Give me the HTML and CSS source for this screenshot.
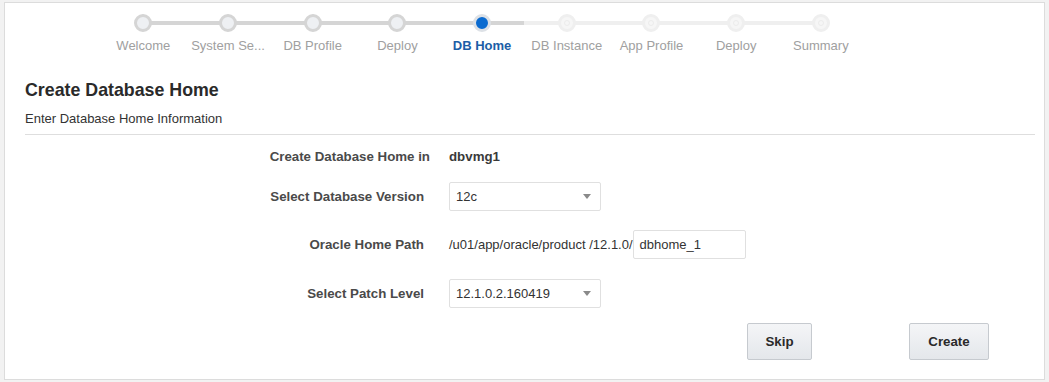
FILE: index.html
```html
<!DOCTYPE html>
<html lang="en">
<head>
  <meta charset="UTF-8" />
  <title>Create Database Home</title>
  <link rel="stylesheet" href="styles.css">
</head>
<body>

  <div class="frame">

    <!-- TRAIN -->
    <ul class="train">
      <li class="stop done"><span class="dot"></span><span class="label">Welcome</span></li>
      <li class="stop done"><span class="dot"></span><span class="label">System Se...</span></li>
      <li class="stop done"><span class="dot"></span><span class="label">DB Profile</span></li>
      <li class="stop done"><span class="dot"></span><span class="label">Deploy</span></li>
      <li class="stop current"><span class="dot"></span><span class="label">DB Home</span></li>
      <li class="stop todo"><span class="dot"></span><span class="label">DB Instance</span></li>
      <li class="stop todo"><span class="dot"></span><span class="label">App Profile</span></li>
      <li class="stop todo"><span class="dot"></span><span class="label">Deploy</span></li>
      <li class="stop todo"><span class="dot"></span><span class="label">Summary</span></li>
    </ul>

    <!-- HEADER -->
    <div class="header">
      <h1 class="page-title">Create Database Home</h1>
      <p class="page-sub">Enter Database Home Information</p>
    </div>

    <!-- FORM -->
    <div class="form">
      <div class="row row-first">
        <label class="field-label">Create Database Home in</label>
        <span class="field-value">dbvmg1</span>
      </div>
      <div class="row row-version">
        <label class="field-label">Select Database Version</label>
        <div class="select"><span>12c</span><span class="arrow"></span></div>
      </div>
      <div class="row">
        <label class="field-label">Oracle Home Path</label>
        <span class="path-prefix">/u01/app/oracle/product /12.1.0/</span>
        <div class="text-input">dbhome_1</div>
      </div>
      <div class="row">
        <label class="field-label">Select Patch Level</label>
        <div class="select"><span>12.1.0.2.160419</span><span class="arrow"></span></div>
      </div>
    </div>

    <div class="buttons">
      <button class="btn btn-skip">Skip</button>
      <button class="btn btn-create">Create</button>
    </div>

  </div>

</body>
</html>
```

FILE: styles.css
```css
html, body {
  margin: 0;
  padding: 0;
}
body {
  background-color: #f2f2f2;
  font-family: "Liberation Sans", Arial, sans-serif;
  color: #333;
  padding: 2px 0 0 4px;
}
.frame {
  width: 1039px;
  height: 376px;
  background-color: #fff;
  border: 1px solid #dcdcdc;
}

/* train */
.train {
  list-style: none;
  margin: 0;
  padding: 11px 0 0 96px;
  display: flex;
}
.stop {
  position: relative;
  width: 84.7px;
  display: flex;
  flex-direction: column;
  align-items: center;
}
.stop::before, .stop::after {
  content: "";
  position: absolute;
  top: 7px;
  height: 4px;
  width: 50%;
  background-color: #d5d5d5;
}
.stop::before { left: 0; }
.stop::after { right: 0; }
.stop:first-child::before, .stop:last-child::after { display: none; }
.todo::before, .todo::after { background-color: #efefef; }
.dot {
  position: relative;
  z-index: 1;
  width: 12px;
  height: 12px;
  border-radius: 50%;
  border: 3px solid #d5d5d5;
  background-color: #eef0f3;
}
.current .dot {
  border-color: #dde1e6;
  background-color: #0b6bd0;
}
.todo .dot {
  border-color: #efefef;
  background-color: #f6f6f6;
}
.todo .dot::after {
  content: "";
  position: absolute;
  left: 3px;
  top: 3px;
  width: 4px;
  height: 4px;
  border-radius: 50%;
  border: 1px solid #ececec;
}
.label {
  margin-top: 6px;
  font-size: 13px;
  line-height: 16px;
  color: #a0a0a0;
  white-space: nowrap;
}
.current .label {
  color: #1c5ea6;
  font-weight: bold;
}

/* header */
.header {
  margin: 26px 9px 0 20px;
  padding-bottom: 7px;
  border-bottom: 1px solid #dedede;
}
.page-title {
  margin: 0;
  font-size: 17.8px;
  line-height: 21px;
  color: #2a2a2a;
}
.page-sub {
  margin: 10px 0 0 0;
  font-size: 13px;
  line-height: 16px;
  color: #333;
}

/* form */
.form {
  margin-top: 7px;
}
.row {
  display: flex;
  align-items: center;
  height: 29px;
  margin-bottom: 20px;
}
.row-first { margin-bottom: 11px; }
.row-version { margin-bottom: 19px; }
.field-label {
  box-sizing: border-box;
  width: 425px;
  margin-right: 19px;
  padding-right: 6px;
  text-align: right;
  font-size: 13.3px;
  font-weight: bold;
  color: #4a4a4a;
}
.row-first .field-label { padding-right: 0; }
.field-value {
  font-size: 13.3px;
  font-weight: bold;
  color: #3a3a3a;
}
.select {
  box-sizing: border-box;
  width: 152px;
  height: 29px;
  border: 1px solid #e0e0e0;
  border-radius: 2px;
  display: flex;
  align-items: center;
  justify-content: space-between;
  padding: 0 9px 0 6px;
  font-size: 13px;
  color: #333;
}
.arrow {
  width: 0;
  height: 0;
  border-left: 4px solid transparent;
  border-right: 4px solid transparent;
  border-top: 5px solid #8a8a8a;
}
.path-prefix {
  font-size: 13px;
  color: #333;
}
.text-input {
  box-sizing: border-box;
  width: 113px;
  height: 29px;
  border: 1px solid #e0e0e0;
  border-radius: 2px;
  padding: 0 6px;
  display: flex;
  align-items: center;
  font-size: 13px;
  color: #333;
}

/* buttons */
.buttons {
  display: flex;
  margin: -5px 0 0 742px;
}
.btn {
  height: 37px;
  font-family: "Liberation Sans", Arial, sans-serif;
  font-size: 13.3px;
  font-weight: bold;
  color: #2a2a2a;
  background: linear-gradient(#f4f5f7, #e4e7eb);
  border: 1px solid #c6cacf;
  border-radius: 2px;
  padding: 0;
}
.btn-skip { width: 65px; }
.btn-create { width: 80px; margin-left: 97px; }
```
